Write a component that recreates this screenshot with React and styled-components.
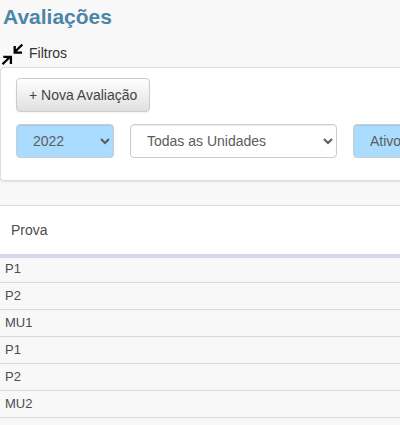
import React from "react"
import styled, { createGlobalStyle } from "styled-components"

const yearOptions = ["2022", "2021", "2020"]
const unitOptions = ["Todas as Unidades"]
const statusOptions = ["Ativos", "Inativos"]

const exams = [
  { id: 1, name: "P1" },
  { id: 2, name: "P2" },
  { id: 3, name: "MU1" },
  { id: 4, name: "P1" },
  { id: 5, name: "P2" },
  { id: 6, name: "MU2" },
]

const CollapseIcon = () => (
  <svg width="22" height="24" viewBox="0 0 22 24" aria-hidden="true">
    <g fill="none" stroke="#000" strokeWidth="2.3">
      <path d="M21.3 1.5L14.5 8.3M13.7 3V9.6H21" />
      <path d="M1.5 21.3L8.8 14M2.3 13.8H9.9V21" />
    </g>
  </svg>
)

const Filter = ({ label, options, size, active }) => (
  <Select aria-label={label} $size={size} $active={active}>
    {options.map((option) => (
      <option key={option}>{option}</option>
    ))}
  </Select>
)

const App = () => {
  return (
    <>
      <GlobalStyle />
      <Page>
        <Heading>Avaliações</Heading>
        <FilterToggle type="button">
          <CollapseIcon />
          Filtros
        </FilterToggle>
        <Panel>
          <NewButton type="button">+ Nova Avaliação</NewButton>
          <Filters>
            <Filter label="Ano" options={yearOptions} size="98px" active />
            <Filter label="Unidade" options={unitOptions} size="207px" />
            <Filter label="Situação" options={statusOptions} size="98px" active />
          </Filters>
        </Panel>
        <Table>
          <thead>
            <tr>
              <HeadCell scope="col">Prova</HeadCell>
            </tr>
          </thead>
          <tbody>
            {exams.map((exam) => (
              <Row key={exam.id}>
                <Cell>{exam.name}</Cell>
              </Row>
            ))}
          </tbody>
        </Table>
      </Page>
    </>
  )
}

export default App

const GlobalStyle = createGlobalStyle`
  * {
    box-sizing: border-box;
  }

  body {
    margin: 0;
    background: #f8f8f8;
    color: #4c4c4c;
    font-family: "Liberation Sans", Arial, sans-serif;
    font-size: 14px;
    line-height: 20px;
  }
`

const Page = styled.main`
  width: 100%;
`

const Heading = styled.h1`
  margin: 0;
  padding: 4px 3px 0;
  color: #4b86a9;
  font-size: 21px;
  line-height: 26px;
`

const FilterToggle = styled.button`
  display: flex;
  align-items: flex-start;
  gap: 6px;
  height: 24px;
  margin-top: 13px;
  padding: 0 1px;
  border: 0;
  background: none;
  color: #333;
  font: inherit;
  cursor: pointer;
`

const Panel = styled.section`
  padding: 10px 15px 22px;
  border: 1px solid #ddd;
  border-right: 0;
  border-radius: 4px 0 0 4px;
  background: #fff;
  box-shadow: 0 1px 2px rgba(0, 0, 0, 0.1);
  overflow: hidden;
`

const NewButton = styled.button`
  display: block;
  height: 34px;
  padding: 0 12px;
  border: 1px solid #ccc;
  border-radius: 4px;
  background: linear-gradient(#fff, #e0e0e0);
  box-shadow: 0 1px 2px rgba(0, 0, 0, 0.05);
  color: #444;
  font: inherit;
  cursor: pointer;
`

const Filters = styled.div`
  display: flex;
  gap: 16px;
  margin-top: 12px;
`

const Select = styled.select`
  flex: none;
  width: ${({ $size }) => $size};
  height: 34px;
  padding: 0 0 0 12px;
  border: 1px solid #ccc;
  border-radius: 4px;
  background: ${({ $active }) => ($active ? "#aadcff" : "#fff")};
  box-shadow: inset 0 1px 1px rgba(0, 0, 0, 0.08);
  color: #5c5c5c;
  font: inherit;
`

const Table = styled.table`
  width: 100%;
  margin-top: 24px;
  border-collapse: collapse;
`

const HeadCell = styled.th`
  height: 50px;
  padding: 0 11px;
  border-top: 1px solid #d8d8e8;
  border-bottom: 4px solid #d8d8e8;
  background: #fff;
  font-weight: normal;
  text-align: left;
`

const Cell = styled.td`
  padding: 4px 5px;
  border-bottom: 1px solid #d8d8e8;
  font-size: 13px;
  line-height: 18px;
`

const Row = styled.tr`
  &:first-child ${Cell} {
    padding-top: 2px;
  }
`
